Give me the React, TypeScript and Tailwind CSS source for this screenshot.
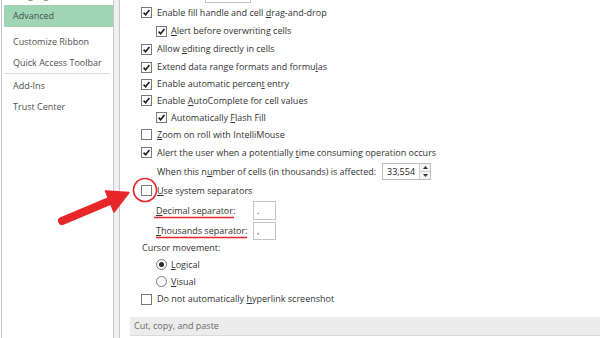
import React from "react";

const font = { fontFamily: '"Open Sans", "Noto Sans", sans-serif' };

function Check({ checked }: { checked?: boolean }) {
  return (
    <div className="w-[11px] h-[11px] border border-[#7a7a7a] bg-white flex items-center justify-center shrink-0">
      {checked && (
        <svg width="9" height="9" viewBox="0 0 9 9">
          <path d="M1.6 4.6 L3.6 6.7 L7.4 1.9" fill="none" stroke="#1e1e1e" strokeWidth="1.6" />
        </svg>
      )}
    </div>
  );
}

function Radio({ checked }: { checked?: boolean }) {
  return (
    <div className="w-[11px] h-[11px] rounded-full border border-[#777] bg-white flex items-center justify-center shrink-0">
      {checked && <div className="w-[5px] h-[5px] rounded-full bg-[#2a2a2a]" />}
    </div>
  );
}

function Row({ h, pl, children }: { h: string; pl: string; children: React.ReactNode }) {
  return <div className={`flex items-center ${h} ${pl}`}>{children}</div>;
}

export default function App() {
  return (
    <div className="relative w-[600px] h-[338px] bg-white overflow-hidden flex text-[9px] text-[#333]" style={font}>
      {/* Sidebar */}
      <div className="ml-[1px] w-[113px] h-full border-l border-r border-[#c8c8c8] pl-[2px] flex flex-col text-[#505050]">
        <div className="-mt-[14px] h-[19px] flex items-center pl-[9px]">Language</div>
        <div className="h-[22px] flex items-center pl-[9px] bg-[#9fd5b5] text-[#46524a]">Advanced</div>
        <div className="mt-[4px] h-[22px] flex items-center pl-[9px]">Customize Ribbon</div>
        <div className="h-[20px] flex items-center pl-[9px]">Quick Access Toolbar</div>
        <div className="h-px bg-[#dcdcdc] mr-[3px]" />
        <div className="h-[23px] flex items-center pl-[9px]">Add-Ins</div>
        <div className="h-[20px] flex items-center pl-[9px]">Trust Center</div>
      </div>
      <div className="w-[5px] h-full bg-[#f0f0f0]" />
      {/* Content */}
      <div className="flex-1 h-full border-l border-[#c8c8c8] flex flex-col">
        <div className="h-[3px] flex">
          <div className="ml-[85px] w-[46px] h-[3px] border-l border-r border-b border-[#c3c3c3]" />
        </div>
        <Row h="h-[19px]" pl="pl-[21px]">
          <Check checked />
          <span className="ml-[5px]">Enable fill handle and cell <u>d</u>rag-and-drop</span>
        </Row>
        <Row h="h-[18px]" pl="pl-[36px]">
          <Check checked />
          <span className="ml-[4px]"><u>A</u>lert before overwriting cells</span>
        </Row>
        <Row h="h-[18px]" pl="pl-[21px]">
          <Check checked />
          <span className="ml-[5px]">Allow <u>e</u>diting directly in cells</span>
        </Row>
        <Row h="h-[18px]" pl="pl-[21px]">
          <Check checked />
          <span className="ml-[5px]">Extend data range formats and formu<u>l</u>as</span>
        </Row>
        <Row h="h-[16px]" pl="pl-[21px]">
          <Check checked />
          <span className="ml-[5px]">Enable automatic percen<u>t</u> entry</span>
        </Row>
        <Row h="h-[17px]" pl="pl-[21px]">
          <Check checked />
          <span className="ml-[5px]">Enable <u>A</u>utoComplete for cell values</span>
        </Row>
        <Row h="h-[17px]" pl="pl-[36px]">
          <Check checked />
          <span className="ml-[4px]">Automatically <u>F</u>lash Fill</span>
        </Row>
        <Row h="h-[17px]" pl="pl-[21px]">
          <Check />
          <span className="ml-[5px]"><u>Z</u>oom on roll with IntelliMouse</span>
        </Row>
        <Row h="h-[19px]" pl="pl-[21px]">
          <Check checked />
          <span className="ml-[5px]">Alert the user when a potentially <u>t</u>ime consuming operation occurs</span>
        </Row>
        <Row h="h-[19px]" pl="pl-[37px]">
          <span className="w-[225px]">When this n<u>u</u>mber of cells (in thousands) is affected:</span>
          <div className="flex h-[17px] w-[49px] border border-[#bdbdbd]">
            <div className="flex-1 flex items-center pl-[4px] text-[#222]">33,554</div>
            <div className="w-[11px] flex flex-col border-l border-[#d0d0d0] bg-[#f3f3f3]">
              <div className="flex-1 flex items-center justify-center border-b border-[#d0d0d0]">
                <svg width="5" height="3" viewBox="0 0 5 3"><path d="M0 3 L2.5 0 L5 3 Z" fill="#333" /></svg>
              </div>
              <div className="flex-1 flex items-center justify-center">
                <svg width="5" height="3" viewBox="0 0 5 3"><path d="M0 0 L2.5 3 L5 0 Z" fill="#333" /></svg>
              </div>
            </div>
          </div>
        </Row>
        <Row h="h-[19px]" pl="pl-[21px]">
          <Check />
          <span className="ml-[5px]"><u>U</u>se system separators</span>
        </Row>
        <Row h="h-[21px]" pl="pl-[36px]">
          <span className="w-[97px]"><u>D</u>ecimal separator:</span>
          <div className="w-[23px] h-[19px] border border-[#c3c3c3] flex items-center pl-[3px]">.</div>
        </Row>
        <Row h="h-[19px]" pl="pl-[36px]">
          <span className="w-[97px]"><u>T</u>housands separator:</span>
          <div className="w-[23px] h-[18px] border border-[#c3c3c3] flex items-center pl-[3px]">,</div>
        </Row>
        <Row h="h-[16px]" pl="pl-[22px]">
          <span>Cursor movement:</span>
        </Row>
        <Row h="h-[17px]" pl="pl-[36px]">
          <Radio checked />
          <span className="ml-[4px]"><u>L</u>ogical</span>
        </Row>
        <Row h="h-[17px]" pl="pl-[36px]">
          <Radio />
          <span className="ml-[4px]"><u>V</u>isual</span>
        </Row>
        <Row h="h-[18px]" pl="pl-[21px]">
          <Check />
          <span className="ml-[5px]">Do not automatically <u>h</u>yperlink screenshot</span>
        </Row>
        <div className="mt-[9px] ml-[10px] h-[19px] bg-[#ececec] border-b border-[#dadada] flex items-center pl-[4px] text-[#6a6a6a]">
          Cut, copy, and paste
        </div>
      </div>

      {/* Red annotations */}
      <svg className="absolute left-0 top-0 pointer-events-none" width="600" height="338" viewBox="0 0 600 338">
        <circle cx="145" cy="190" r="11.5" fill="none" stroke="#e8262a" strokeWidth="1.6" />
        <line x1="62" y1="221" x2="112" y2="200" stroke="#e8262a" strokeWidth="8" strokeLinecap="round" />
        <path d="M129 192.5 L105.5 191 L114 212 Z" fill="#e8262a" stroke="#e8262a" strokeWidth="1.5" strokeLinejoin="round" />
        <line x1="154" y1="217.5" x2="234" y2="217.5" stroke="#e8262a" strokeWidth="1.3" />
        <line x1="156" y1="237.5" x2="247" y2="237.5" stroke="#e8262a" strokeWidth="1.3" />
      </svg>
    </div>
  );
}
